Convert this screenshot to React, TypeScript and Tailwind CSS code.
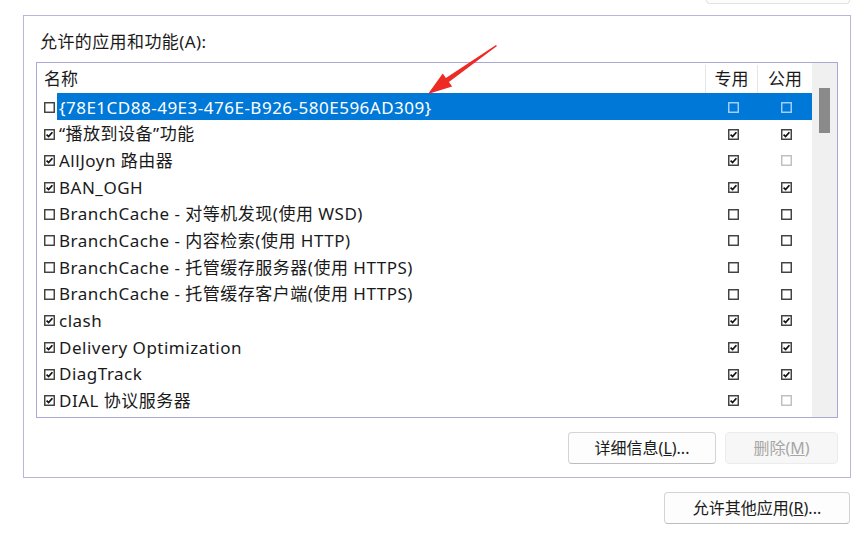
import React from "react";

type Mark = "on" | "off" | "dim";

const RULES: { name: string; mark: Mark; priv: Mark; pub: Mark; selected?: boolean }[] = [
  { name: "{78E1CD88-49E3-476E-B926-580E596AD309}", mark: "off", priv: "off", pub: "off", selected: true },
  { name: "“播放到设备”功能", mark: "on", priv: "on", pub: "on" },
  { name: "AllJoyn 路由器", mark: "on", priv: "on", pub: "dim" },
  { name: "BAN_OGH", mark: "on", priv: "on", pub: "on" },
  { name: "BranchCache - 对等机发现(使用 WSD)", mark: "off", priv: "off", pub: "off" },
  { name: "BranchCache - 内容检索(使用 HTTP)", mark: "off", priv: "off", pub: "off" },
  { name: "BranchCache - 托管缓存服务器(使用 HTTPS)", mark: "off", priv: "off", pub: "off" },
  { name: "BranchCache - 托管缓存客户端(使用 HTTPS)", mark: "off", priv: "off", pub: "off" },
  { name: "clash", mark: "on", priv: "on", pub: "on" },
  { name: "Delivery Optimization", mark: "on", priv: "on", pub: "on" },
  { name: "DiagTrack", mark: "on", priv: "on", pub: "on" },
  { name: "DIAL 协议服务器", mark: "on", priv: "on", pub: "dim" },
];

function Box({ mark, inverted }: { mark: Mark; inverted?: boolean }) {
  const stroke = inverted ? "#a8d4ff" : mark === "dim" ? "#bdbdbd" : "#3a3a3a";
  return (
    <svg width="11" height="11" viewBox="0 0 11 11" className="block">
      <rect x="0.75" y="0.75" width="9.5" height="9.5" fill={inverted ? "none" : "#fff"} stroke={stroke} strokeWidth="1.4" />
      {mark === "on" && (
        <path d="M2.6 5.6 L4.6 7.6 L8.4 3.2" fill="none" stroke="#111" strokeWidth="1.7" />
      )}
    </svg>
  );
}

function Btn({ children, disabled, className }: { children: React.ReactNode; disabled?: boolean; className: string }) {
  return (
    <div
      className={
        "flex h-[32px] items-center justify-center rounded-[4px] border text-[16px] " +
        (disabled
          ? "border-[#ececec] bg-[#f7f7f7] text-[#a6a6a6] "
          : "border-[#d4d4d4] border-b-[#bdbdbd] bg-[#fdfdfd] text-[#1b1b1b] ") +
        className
      }
    >
      {children}
    </div>
  );
}

export default function App() {
  return (
    <div
      className="relative h-[534px] w-[865px] overflow-hidden bg-white text-[#1a1a1a]"
      style={{ fontFamily: '"Noto Sans", "Noto Sans CJK SC", sans-serif' }}
    >
      {/* bottom edge of a button above the fold */}
      <div className="ml-[706px] h-[4px] w-[144px] rounded-b-[4px] border border-t-0 border-[#e2e2e2] bg-[#fdfdfd]" />

      <div className="ml-[23px] mt-[11px] h-[463px] w-[828px] border border-[#b6b6de] px-[12px]">
        <div className="pt-[16px] pl-[4px] text-[17px] leading-[20px] tracking-[0.4px]">允许的应用和功能(A):</div>

        <div className="mt-[10px] flex h-[356px] w-[802px] overflow-hidden border border-[#a9a9d9]">
          <div className="w-[775px]">
            <div className="flex h-[30px] items-center pt-[2px] text-[17px]">
              <div className="w-[668px] pl-[7px]">名称</div>
              <div className="flex h-full w-[52px] items-center justify-center border-l border-[#e6e6e6]">专用</div>
              <div className="flex h-full w-[55px] items-center justify-center border-l border-[#e6e6e6]">公用</div>
            </div>
            {RULES.map((r) => (
              <div key={r.name} className="flex h-[26.7px] items-center text-[17px]">
                <div className="flex w-[20px] justify-end pr-[2px] pt-[2px]">
                  <Box mark={r.mark} />
                </div>
                <div className={"flex h-full flex-1 items-center " + (r.selected ? "bg-[#0078d7] text-white" : "")}>
                  <div className="w-[648px] whitespace-nowrap pl-[2px] pt-[2px] tracking-[0.5px]">{r.name}</div>
                  <div className="flex w-[52px] justify-center pl-[4px] pt-[2px]">
                    <Box mark={r.priv} inverted={r.selected} />
                  </div>
                  <div className="flex w-[55px] justify-center pl-[4px] pt-[2px]">
                    <Box mark={r.pub} inverted={r.selected} />
                  </div>
                </div>
              </div>
            ))}
          </div>
          <div className="w-[25px] bg-[#f0f0f0] pl-[7px] pt-[25px]">
            <div className="h-[45px] w-[11px] bg-[#8a8a8a]" />
          </div>
        </div>

        <div className="mt-[14px] flex justify-end gap-[9px]">
          <Btn className="w-[148px]">
            详细信息(<span className="underline">L</span>)...
          </Btn>
          <Btn disabled className="w-[113px]">
            删除(<span className="underline">M</span>)
          </Btn>
        </div>
      </div>

      <div className="mt-[14px] flex justify-end pr-[15px]">
        <Btn className="w-[186px]">
          允许其他应用(<span className="underline">R</span>)...
        </Btn>
      </div>

      {/* red annotation arrow */}
      <svg className="pointer-events-none absolute left-0 top-0" width="865" height="534">
        <polygon
          points="496,44.9 445.9,78 442.7,73.5 428,94 452.1,86.5 448.9,82 497,46.1"
          fill="#ee2a24"
        />
      </svg>
    </div>
  );
}
